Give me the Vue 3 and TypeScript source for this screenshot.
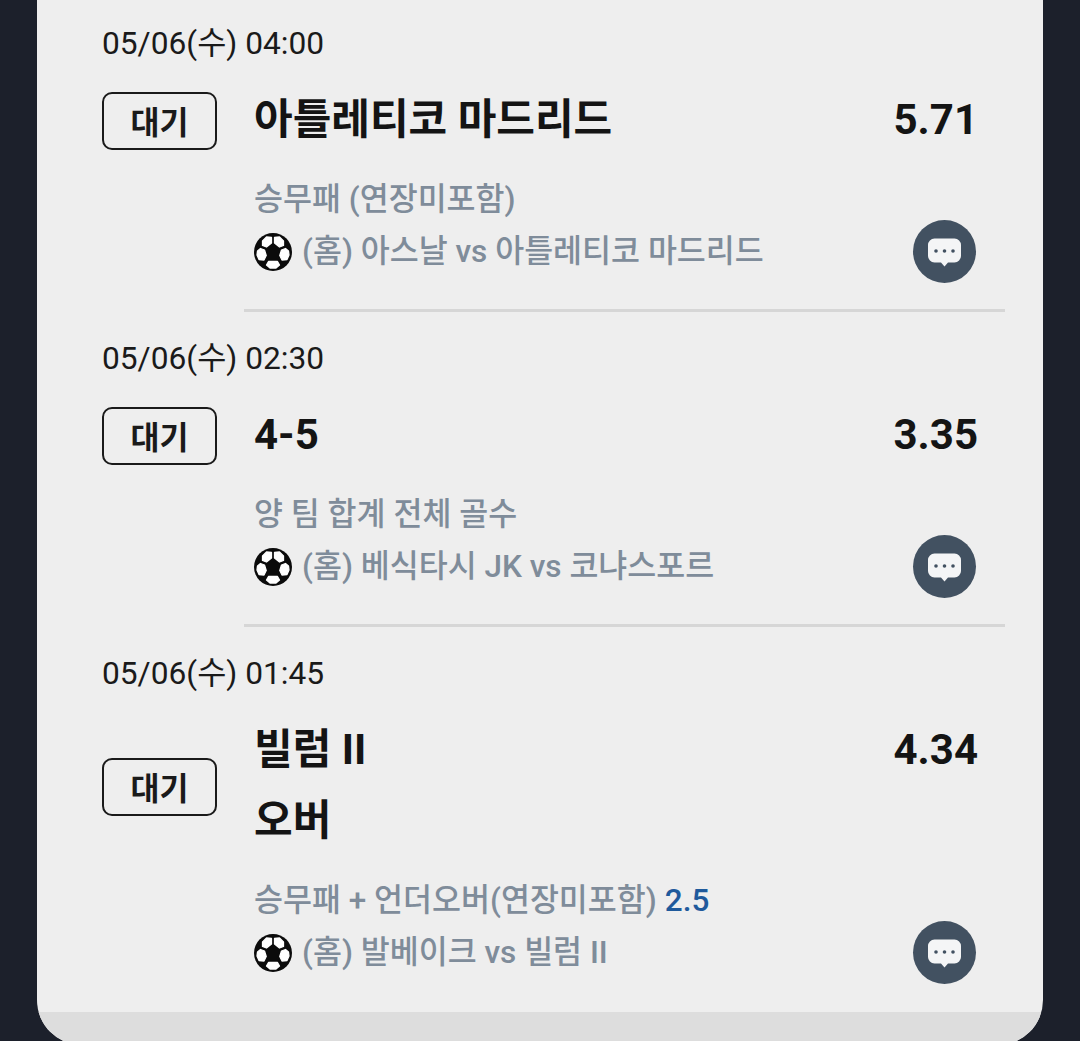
<script setup lang="ts">
interface Bet {
  date: string
  titles: string[]
  odds: string
  market: string
  line?: string
  match: string
}

const bets: Bet[] = [
  { date: '05/06(수) 04:00', titles: ['아틀레티코 마드리드'], odds: '5.71', market: '승무패 (연장미포함)', match: '(홈) 아스날 vs 아틀레티코 마드리드' },
  { date: '05/06(수) 02:30', titles: ['4-5'], odds: '3.35', market: '양 팀 합계 전체 골수', match: '(홈) 베식타시 JK vs 코냐스포르' },
  { date: '05/06(수) 01:45', titles: ['빌럼 II', '오버'], odds: '4.34', market: '승무패 + 언더오버(연장미포함)', line: '2.5', match: '(홈) 발베이크 vs 빌럼 II' },
]

const patches = [
  '-10.500,-11 -6.500,-15 -1.500,-14.500 -1.500,-9 -6.500,-5 -10.500,-6.500',
  '10.500,-11 6.500,-15 1.500,-14.500 1.500,-9 6.500,-5 10.500,-6.500',
  '-15.500,-1 -12.500,-3.500 -8.500,-2 -6.800,3.500 -9,8 -14,7.500 -16,3',
  '15.500,-1 12.500,-3.500 8.500,-2 6.800,3.500 9,8 14,7.500 16,3',
  '-4.500,9.500 4.500,9.500 6.500,13 3,16 -3,16 -6.500,13',
]
</script>

<template>
  <div class="page">
    <section class="card">
      <template v-for="(bet, i) in bets" :key="bet.date">
        <div v-if="i > 0" class="divider"></div>
        <article class="item">
          <div class="date">{{ bet.date }}</div>
          <div class="main">
            <div class="status-col">
              <span class="status">대기</span>
            </div>
            <div class="content">
              <div class="head">
                <div class="titles">
                  <div v-for="t in bet.titles" :key="t" class="title">{{ t }}</div>
                </div>
                <div class="odds">{{ bet.odds }}</div>
              </div>
            </div>
          </div>
          <div class="foot">
            <div class="meta">
              <div class="market">{{ bet.market }}<span v-if="bet.line" class="line">{{ bet.line }}</span></div>
              <div class="match">
                <svg class="ball" viewBox="-19 -19 38 38" aria-hidden="true">
                  <circle r="19" fill="#0b0b0b" />
                  <polygon
                    v-for="p in patches"
                    :key="p"
                    :points="p"
                    fill="#fff"
                    stroke="#fff"
                    stroke-width="1.300"
                    stroke-linejoin="round"
                  />
                </svg>
                <span>{{ bet.match }}</span>
              </div>
            </div>
            <button class="chat" type="button" aria-label="댓글">
              <svg viewBox="0 0 63 63" width="63" height="63" aria-hidden="true">
                <path
                  d="M21.500 18.500h20a6.500 6.500 0 0 1 6.500 6.500v11a6.500 6.500 0 0 1-6.500 6.500h-6.500l-3.500 4-3.500-4h-6.500a6.500 6.500 0 0 1-6.500-6.500v-11a6.500 6.500 0 0 1 6.500-6.500z"
                  fill="#f4f5f6"
                />
                <circle cx="23" cy="31" r="1.800" fill="#425161" />
                <circle cx="31.500" cy="31" r="1.800" fill="#425161" />
                <circle cx="40" cy="31" r="1.800" fill="#425161" />
              </svg>
            </button>
          </div>
        </article>
      </template>
      <div class="band"></div>
    </section>
  </div>
</template>

<style>
html,
body {
  margin: 0;
  background: #1c202b;
}
</style>

<style scoped>
.page {
  width: 1080px;
  height: 1041px;
  overflow: hidden;
  background: #1c202b;
  padding: 0 37px;
  box-sizing: border-box;
  font-family: Roboto, "Noto Sans CJK KR", sans-serif;
}
.card {
  width: 1006px;
  margin-top: -3px;
  background: #eeeeee;
  border-radius: 0 0 45px 45px;
  overflow: hidden;
}
.item {
  padding: 26px 67px 31px 65px;
}
.item:last-of-type {
  padding-bottom: 33px;
}
.date {
  font-size: 31.700px;
  line-height: 42px;
  margin-bottom: -2px;
  color: #1a1a1a;
}
.main {
  display: flex;
  margin-top: 22px;
}
.status-col {
  width: 152px;
  flex: none;
  display: flex;
  align-items: center;
}
.status {
  width: 115px;
  height: 58px;
  box-sizing: border-box;
  margin-top: 2px;
  padding-bottom: 2px;
  border: 2px solid #1a1a1a;
  border-radius: 10px;
  display: flex;
  align-items: center;
  justify-content: center;
  font-size: 31.500px;
  font-weight: 700;
  color: #1a1a1a;
}
.content {
  flex: 1;
  min-width: 0;
}
.head {
  display: flex;
  justify-content: space-between;
  align-items: flex-start;
  margin-right: -2px;
}
.title,
.odds {
  font-size: 42px;
  line-height: 70px;
  font-weight: 700;
  color: #141414;
}
.title + .title {
  margin-top: 1px;
}
.foot {
  display: flex;
  justify-content: space-between;
  align-items: flex-end;
  margin-top: 19px;
  padding-left: 152px;
}
.meta {
  min-width: 0;
}
.market,
.match {
  font-size: 31.500px;
  line-height: 52px;
  font-weight: 500;
  color: #7f8c9a;
  white-space: nowrap;
}
.line {
  margin-left: 8px;
  color: #1f5a9c;
}
.match {
  display: flex;
  align-items: center;
  gap: 10px;
}
.ball {
  width: 38px;
  height: 38px;
  flex: none;
}
.chat {
  width: 63px;
  height: 63px;
  flex: none;
  margin-bottom: -5px;
  padding: 0;
  border: 0;
  border-radius: 50%;
  background: #425161;
  display: block;
}
.chat svg {
  display: block;
}
.divider {
  height: 3px;
  width: 761px;
  margin-left: 207px;
  background: #d6d6d6;
}
.band {
  height: 33px;
  background: #dddddd;
}
</style>
